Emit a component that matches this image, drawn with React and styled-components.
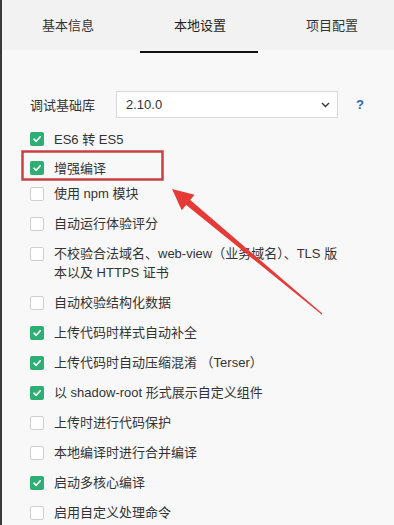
import React from "react";
import styled, { createGlobalStyle } from "styled-components";

const GlobalStyle = createGlobalStyle`
  html, body { margin: 0; padding: 0; background: #f8f8f8; }
  body {
    font-family: "Liberation Sans", "Noto Sans CJK SC", Arial, sans-serif;
    color: #333;
  }
`;

const Page = styled.div`
  position: relative;
  width: 394px;
  height: 525px;
  box-sizing: border-box;
  overflow: hidden;
  background: #f8f8f8;
  border-left: 2px solid #3a3a3a;
`;

const TabBar = styled.div`
  display: grid;
  grid-template-columns: repeat(3, 132px);
  height: 50px;
  background: #f2f2f2;
`;

const Tab = styled.div`
  position: relative;
  text-align: center;
  font-size: 13px;
  line-height: 52px;
  color: ${(p) => (p.$active ? "#222" : "#333")};
  &::after {
    content: "";
    display: ${(p) => (p.$active ? "block" : "none")};
    position: absolute;
    left: 6px;
    right: 8px;
    bottom: -1px;
    height: 2px;
    background: #111;
  }
`;

const Content = styled.div`
  padding: 41px 0 0 28px;
`;

const SelectRow = styled.div`
  display: flex;
  align-items: center;
  height: 27px;
  font-size: 13px;
`;

const Label = styled.span`
  width: 86px;
`;

const Select = styled.div`
  box-sizing: border-box;
  width: 222px;
  height: 27px;
  display: flex;
  align-items: center;
  justify-content: space-between;
  padding: 0 7px 0 9px;
  background: #fff;
  border: 1px solid #d9d9d9;
  font-size: 13px;
  color: #333;
`;

const Help = styled.span`
  margin-left: 18px;
  color: #2f63c4;
  font-weight: bold;
  font-size: 13px;
`;

const List = styled.div`
  margin-top: 6px;
  display: flex;
  flex-direction: column;
`;

const Row = styled.div`
  display: flex;
  align-items: flex-start;
  padding: 5.5px 0 ${(p) => p.$pb ?? 5.5}px;
  font-size: 13px;
  line-height: 19px;
  color: #333;
`;

const Box = styled.span`
  flex: none;
  box-sizing: border-box;
  width: 14px;
  height: 14px;
  margin: 2.5px 10px 0 0;
  border-radius: 2px;
  display: flex;
  align-items: center;
  justify-content: center;
  background: ${(p) => (p.$checked ? "#2fae74" : "#fff")};
  border: ${(p) => (p.$checked ? "none" : "1px solid #cfcfcf")};
`;

const Overlay = styled.svg`
  position: absolute;
  left: -2px;
  top: 0;
  pointer-events: none;
`;

const items = [
  { t: "ES6 转 ES5", c: true, pb: 4.5 },
  { t: "增强编译", c: true, pb: 1 },
  { t: "使用 npm 模块", c: false },
  { t: "自动运行体验评分", c: false },
  { t: ["不校验合法域名、web-view（业务域名）、TLS 版", "本以及 HTTPS 证书"], c: false },
  { t: "自动校验结构化数据", c: false },
  { t: "上传代码时样式自动补全", c: true },
  { t: "上传代码时自动压缩混淆 （Terser）", c: true },
  { t: "以 shadow-root 形式展示自定义组件", c: true },
  { t: "上传时进行代码保护", c: false },
  { t: "本地编译时进行合并编译", c: false },
  { t: "启动多核心编译", c: true },
  { t: "启用自定义处理命令", c: false },
];

function Check({ checked }) {
  return (
    <Box $checked={checked}>
      {checked && (
        <svg width="10" height="10" viewBox="0 0 10 10">
          <path d="M2 5.2 L4.2 7.3 L8.2 2.8" fill="none" stroke="#fff" strokeWidth="1.6" strokeLinecap="round" strokeLinejoin="round" />
        </svg>
      )}
    </Box>
  );
}

export default function App() {
  const tip = [172, 189];
  const tail = [322, 314];
  const dx = tail[0] - tip[0];
  const dy = tail[1] - tip[1];
  const len = Math.hypot(dx, dy);
  const ux = dx / len, uy = dy / len;
  const px = -uy, py = ux;
  const hl = 21, hw = 10;
  const bx = tip[0] + ux * hl, by = tip[1] + uy * hl;
  const sb = tip[0] + ux * (hl - 3), sby = tip[1] + uy * (hl - 3);
  const head = `${tip[0]},${tip[1]} ${bx + px * hw},${by + py * hw} ${bx - px * hw},${by - py * hw}`;
  const shaft = `${sb + px * 3.3},${sby + py * 3.3} ${tail[0] + px * 0.5},${tail[1] + py * 0.5} ${tail[0] - px * 0.5},${tail[1] - py * 0.5} ${sb - px * 3.3},${sby - py * 3.3}`;

  return (
    <>
      <GlobalStyle />
      <Page>
        <TabBar>
          <Tab>基本信息</Tab>
          <Tab $active>本地设置</Tab>
          <Tab>项目配置</Tab>
        </TabBar>
        <Content>
          <SelectRow>
            <Label>调试基础库</Label>
            <Select>
              <span>2.10.0</span>
              <svg width="9" height="6" viewBox="0 0 9 6">
                <path d="M1 1 L4.5 4.5 L8 1" fill="none" stroke="#333" strokeWidth="1.4" />
              </svg>
            </Select>
            <Help>?</Help>
          </SelectRow>
          <List>
            {items.map((it, i) => (
              <Row key={i} $pb={it.pb}>
                <Check checked={it.c} />
                <span>
                  {Array.isArray(it.t) ? (
                    <>
                      {it.t[0]}
                      <br />
                      {it.t[1]}
                    </>
                  ) : (
                    it.t
                  )}
                </span>
              </Row>
            ))}
          </List>
        </Content>
        <Overlay width="394" height="525" viewBox="0 0 394 525">
          <rect x="22.5" y="151.5" width="140" height="28" fill="none" stroke="#c94040" strokeWidth="2.5" />
          <polygon points={shaft} fill="#e63a36" />
          <polygon points={head} fill="#e63a36" />
        </Overlay>
      </Page>
    </>
  );
}
